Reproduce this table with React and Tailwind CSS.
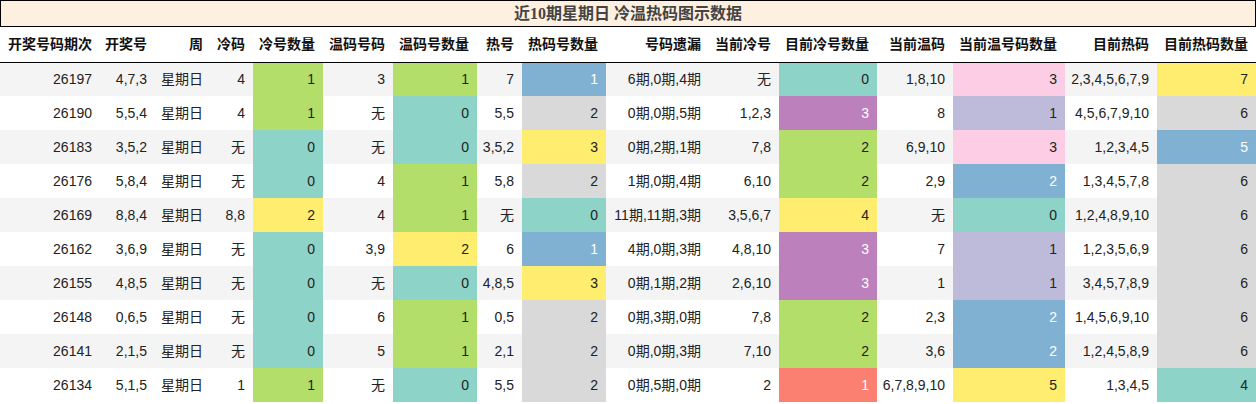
import React from "react";

const C = {
  t: "bg-[#8dd3c7] text-[#222]",
  g: "bg-[#b3de69] text-[#222]",
  y: "bg-[#ffed6f] text-[#222]",
  b: "bg-[#80b1d3] text-white",
  d: "bg-[#d9d9d9] text-[#222]",
  p: "bg-[#bc80bd] text-white",
  k: "bg-[#fccde5] text-[#222]",
  l: "bg-[#bebada] text-[#222]",
  s: "bg-[#fb8072] text-white",
};

const widths = [100, 55, 56, 42, 70, 70, 84, 45, 84, 103, 70, 98, 76, 112, 92, 99];
const headers = [
  "开奖号码期次", "开奖号", "周", "冷码", "冷号数量", "温码号码", "温码号数量", "热号",
  "热码号数量", "号码遗漏", "当前冷号", "目前冷号数量", "当前温码", "当前温号码数量", "目前热码", "目前热码数量",
];

// colored columns: index 4, 6, 8, 11, 13, 15 -> [value, colorKey]
const rows = [
  ["26197", "4,7,3", "星期日", "4", ["1", "g"], "3", ["1", "g"], "7", ["1", "b"], "6期,0期,4期", "无", ["0", "t"], "1,8,10", ["3", "k"], "2,3,4,5,6,7,9", ["7", "y"]],
  ["26190", "5,5,4", "星期日", "4", ["1", "g"], "无", ["0", "t"], "5,5", ["2", "d"], "0期,0期,5期", "1,2,3", ["3", "p"], "8", ["1", "l"], "4,5,6,7,9,10", ["6", "d"]],
  ["26183", "3,5,2", "星期日", "无", ["0", "t"], "无", ["0", "t"], "3,5,2", ["3", "y"], "0期,2期,1期", "7,8", ["2", "g"], "6,9,10", ["3", "k"], "1,2,3,4,5", ["5", "b"]],
  ["26176", "5,8,4", "星期日", "无", ["0", "t"], "4", ["1", "g"], "5,8", ["2", "d"], "1期,0期,4期", "6,10", ["2", "g"], "2,9", ["2", "b"], "1,3,4,5,7,8", ["6", "d"]],
  ["26169", "8,8,4", "星期日", "8,8", ["2", "y"], "4", ["1", "g"], "无", ["0", "t"], "11期,11期,3期", "3,5,6,7", ["4", "y"], "无", ["0", "t"], "1,2,4,8,9,10", ["6", "d"]],
  ["26162", "3,6,9", "星期日", "无", ["0", "t"], "3,9", ["2", "y"], "6", ["1", "b"], "4期,0期,3期", "4,8,10", ["3", "p"], "7", ["1", "l"], "1,2,3,5,6,9", ["6", "d"]],
  ["26155", "4,8,5", "星期日", "无", ["0", "t"], "无", ["0", "t"], "4,8,5", ["3", "y"], "0期,1期,2期", "2,6,10", ["3", "p"], "1", ["1", "l"], "3,4,5,7,8,9", ["6", "d"]],
  ["26148", "0,6,5", "星期日", "无", ["0", "t"], "6", ["1", "g"], "0,5", ["2", "d"], "0期,3期,0期", "7,8", ["2", "g"], "2,3", ["2", "b"], "1,4,5,6,9,10", ["6", "d"]],
  ["26141", "2,1,5", "星期日", "无", ["0", "t"], "5", ["1", "g"], "2,1", ["2", "d"], "0期,0期,3期", "7,10", ["2", "g"], "3,6", ["2", "b"], "1,2,4,5,8,9", ["6", "d"]],
  ["26134", "5,1,5", "星期日", "1", ["1", "g"], "无", ["0", "t"], "5,5", ["2", "d"], "0期,5期,0期", "2", ["1", "s"], "6,7,8,9,10", ["5", "y"], "1,3,4,5", ["4", "t"]],
];

export default function App() {
  return (
    <div className="w-[1256px] h-[404px] bg-white overflow-hidden font-['Liberation_Sans','Noto_Sans_CJK_SC',sans-serif]">
      <div className="h-[27px] border border-black bg-[#fef0e0] flex items-center justify-center text-[16px] font-bold text-[#444] font-['Liberation_Serif','Noto_Sans_CJK_SC',serif] leading-none">
        近10期星期日 冷温热码图示数据
      </div>
      <table className="table-fixed border-collapse w-[1256px]">
        <colgroup>
          {widths.map((w, i) => (
            <col key={i} style={{ width: w }} />
          ))}
        </colgroup>
        <thead>
          <tr className="h-[35px] border-b border-black">
            {headers.map((h, i) => (
              <th key={i} className="p-0 pr-2 text-right text-[14px] font-bold text-[#111] whitespace-nowrap align-middle">
                {h}
              </th>
            ))}
          </tr>
        </thead>
        <tbody>
          {rows.map((r, ri) => (
            <tr key={ri} className={`h-[34px] ${ri % 2 === 0 ? "bg-[#f4f4f4]" : "bg-white"}`}>
              {r.map((c, ci) =>
                Array.isArray(c) ? (
                  <td key={ci} className={`p-0 pr-2 text-right text-[14px] whitespace-nowrap align-middle ${C[c[1]]}`}>
                    {c[0]}
                  </td>
                ) : (
                  <td key={ci} className="p-0 pr-2 text-right text-[14px] text-[#222] whitespace-nowrap align-middle">
                    {c}
                  </td>
                )
              )}
            </tr>
          ))}
        </tbody>
      </table>
    </div>
  );
}
